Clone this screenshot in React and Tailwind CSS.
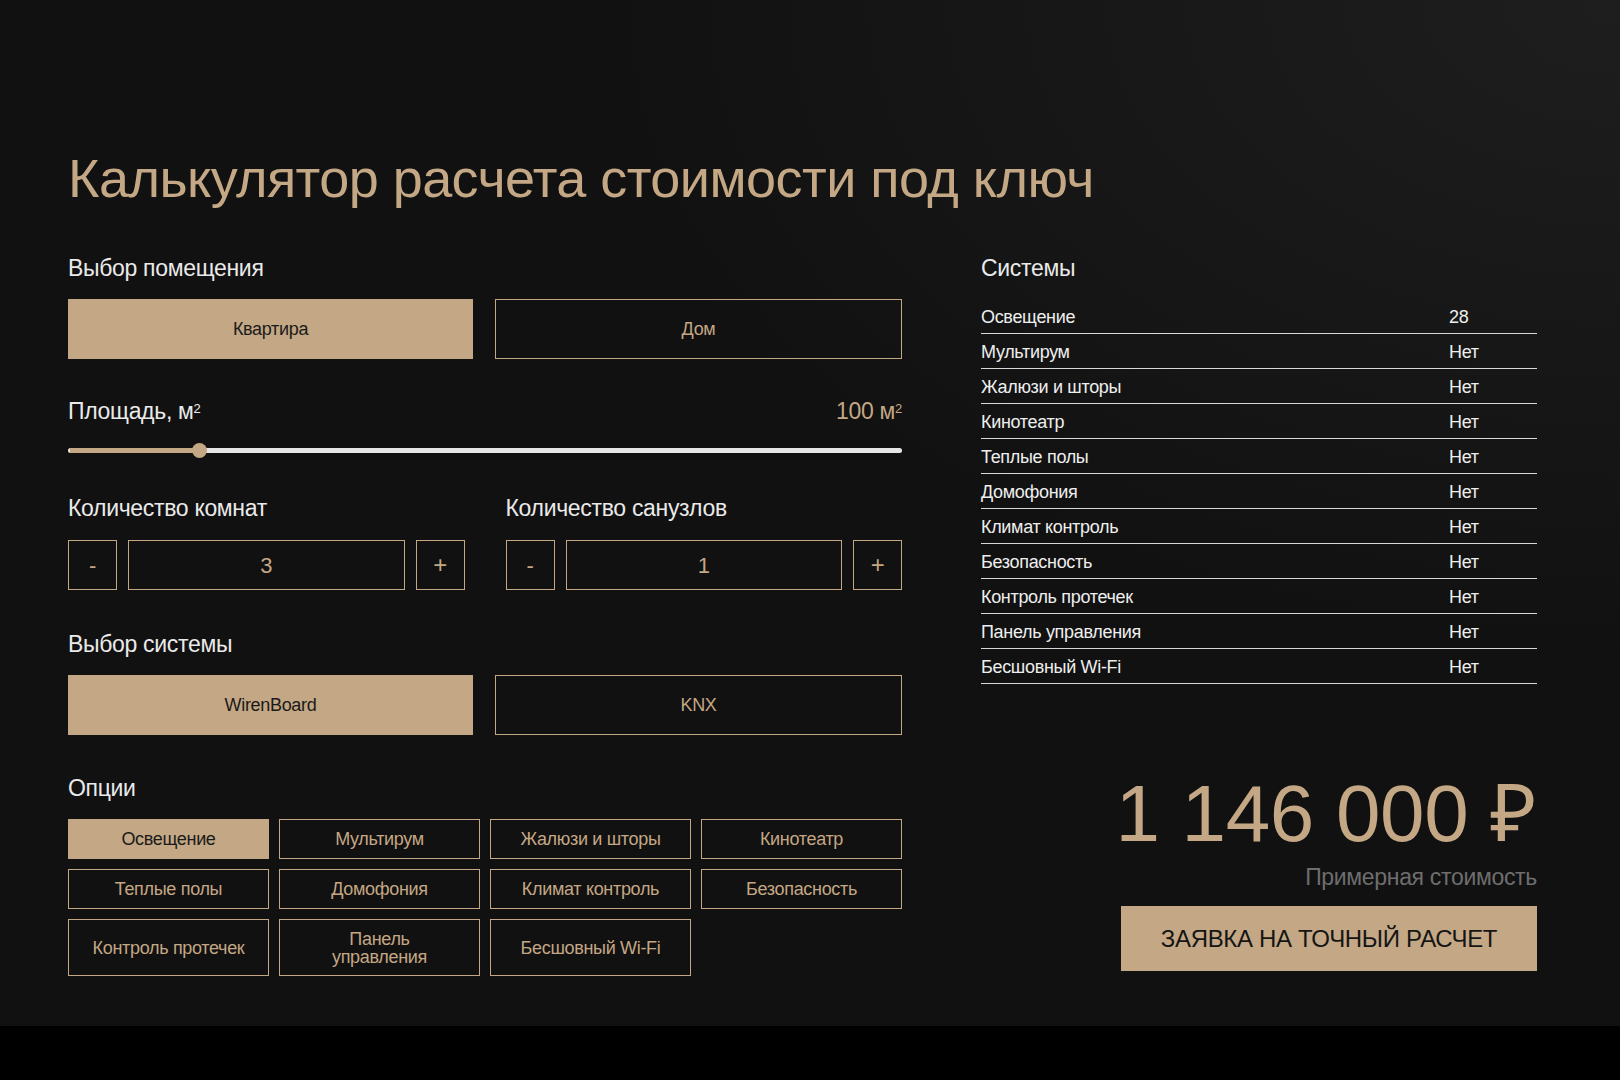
export default function App() {
  const gold = "text-[#c4a784]";
  const systems = [
    ["Освещение", "28"], ["Мультирум", "Нет"], ["Жалюзи и шторы", "Нет"], ["Кинотеатр", "Нет"],
    ["Теплые полы", "Нет"], ["Домофония", "Нет"], ["Климат контроль", "Нет"], ["Безопасность", "Нет"],
    ["Контроль протечек", "Нет"], ["Панель управления", "Нет"], ["Бесшовный Wi-Fi", "Нет"],
  ];
  const opts = ["Освещение", "Мультирум", "Жалюзи и шторы", "Кинотеатр", "Теплые полы", "Домофония", "Климат контроль", "Безопасность"];
  const Counter = ({ v }) => (
    <div className="flex gap-[11px] h-[50px]">
      <div className={`w-[49px] border border-[#c4a784] flex items-center justify-center text-[22px] ${gold}`}>-</div>
      <div className={`flex-1 border border-[#c4a784] flex items-center justify-center text-[22px] ${gold}`}>{v}</div>
      <div className={`w-[49px] border border-[#c4a784] flex items-center justify-center text-[24px] ${gold}`}>+</div>
    </div>
  );
  return (
    <div className="w-[1620px] h-[1080px] bg-black tracking-[-0.02em]" style={{ fontFamily: '"Liberation Sans", Arial, sans-serif' }}>
      <div className="h-[1026px] bg-[radial-gradient(ellipse_at_top_right,#1e1e1e,#111111_45%)] px-[68px] pt-[148px]">
        <h1 className={`text-[54px] leading-[60px] font-light tracking-[-0.01em] ${gold}`}>Калькулятор расчета стоимости под ключ</h1>
        <div className="flex mt-[45px]">
          <div className="w-[834px]">
            <div className="text-[23px] text-[#eaeaea] leading-[30px]">Выбор помещения</div>
            <div className="flex gap-[22px] mt-[16px]">
              <div className="flex-1 h-[60px] bg-[#c4a784] flex items-center justify-center text-[18px] text-[#1a1a1a]">Квартира</div>
              <div className={`flex-1 h-[60px] border border-[#c4a784] flex items-center justify-center text-[18px] ${gold}`}>Дом</div>
            </div>
            <div className="flex justify-between mt-[37px] leading-[30px]">
              <div className="text-[23px] text-[#eaeaea]">Площадь, м<sup className="text-[13px]">2</sup></div>
              <div className={`text-[23px] ${gold}`}>100 м<sup className="text-[13px]">2</sup></div>
            </div>
            <div className="relative h-[16px] mt-[16px] flex items-center">
              <div className="h-[5px] w-full bg-[#e6e6e6] rounded"></div>
              <div className="absolute left-[2px] h-[5px] w-[128px] bg-[#c4a784]"></div>
              <div className="absolute left-[124px] w-[15px] h-[15px] rounded-full bg-[#c4a784]"></div>
            </div>
            <div className="grid grid-cols-2 gap-[41px] mt-[35px]">
              <div>
                <div className="text-[23px] text-[#eaeaea] leading-[30px]">Количество комнат</div>
                <div className="mt-[17px]"><Counter v="3" /></div>
              </div>
              <div>
                <div className="text-[23px] text-[#eaeaea] leading-[30px]">Количество санузлов</div>
                <div className="mt-[17px]"><Counter v="1" /></div>
              </div>
            </div>
            <div className="text-[23px] text-[#eaeaea] leading-[30px] mt-[39px]">Выбор системы</div>
            <div className="flex gap-[22px] mt-[16px]">
              <div className="flex-1 h-[60px] bg-[#c4a784] flex items-center justify-center text-[18px] text-[#1a1a1a]">WirenBoard</div>
              <div className={`flex-1 h-[60px] border border-[#c4a784] flex items-center justify-center text-[18px] ${gold}`}>KNX</div>
            </div>
            <div className="text-[23px] text-[#eaeaea] leading-[30px] mt-[38px]">Опции</div>
            <div className="grid grid-cols-4 gap-[10px] mt-[16px] text-[18px] leading-[18px]">
              {opts.map((o, i) => (
                <div key={o} className={`h-[40px] flex items-center justify-center ${i === 0 ? "bg-[#c4a784] text-[#1a1a1a]" : `border border-[#c4a784] ${gold}`}`}>{o}</div>
              ))}
              <div className={`h-[57px] flex items-center justify-center border border-[#c4a784] ${gold}`}>Контроль протечек</div>
              <div className={`h-[57px] flex items-center justify-center text-center border border-[#c4a784] ${gold}`}>Панель<br />управления</div>
              <div className={`h-[57px] flex items-center justify-center border border-[#c4a784] ${gold}`}>Бесшовный Wi-Fi</div>
            </div>
          </div>
          <div className="ml-[79px] w-[556px] flex flex-col">
            <div className="text-[23px] text-[#eaeaea] leading-[30px]">Системы</div>
            <div className="mt-[16px]">
              {systems.map(([n, v]) => (
                <div key={n} className="flex h-[35px] items-center border-b border-[#d8d8d8] text-[18px] text-[#eeeeee] pt-[2px]">
                  <div className="w-[468px]">{n}</div>
                  <div>{v}</div>
                </div>
              ))}
            </div>
            <div className={`text-right text-[80px] leading-[80px] font-light mt-[90px] ${gold}`}>1 146 000 ₽</div>
            <div className="text-right text-[23px] text-[#6e6e6e] mt-[8px] leading-[30px]">Примерная стоимость</div>
            <div className="flex justify-end mt-[14px]">
              <div className="w-[416px] h-[65px] bg-[#c4a784] flex items-center justify-center text-[24px] text-[#151515]">ЗАЯВКА НА ТОЧНЫЙ РАСЧЕТ</div>
            </div>
          </div>
        </div>
      </div>
    </div>
  );
}
